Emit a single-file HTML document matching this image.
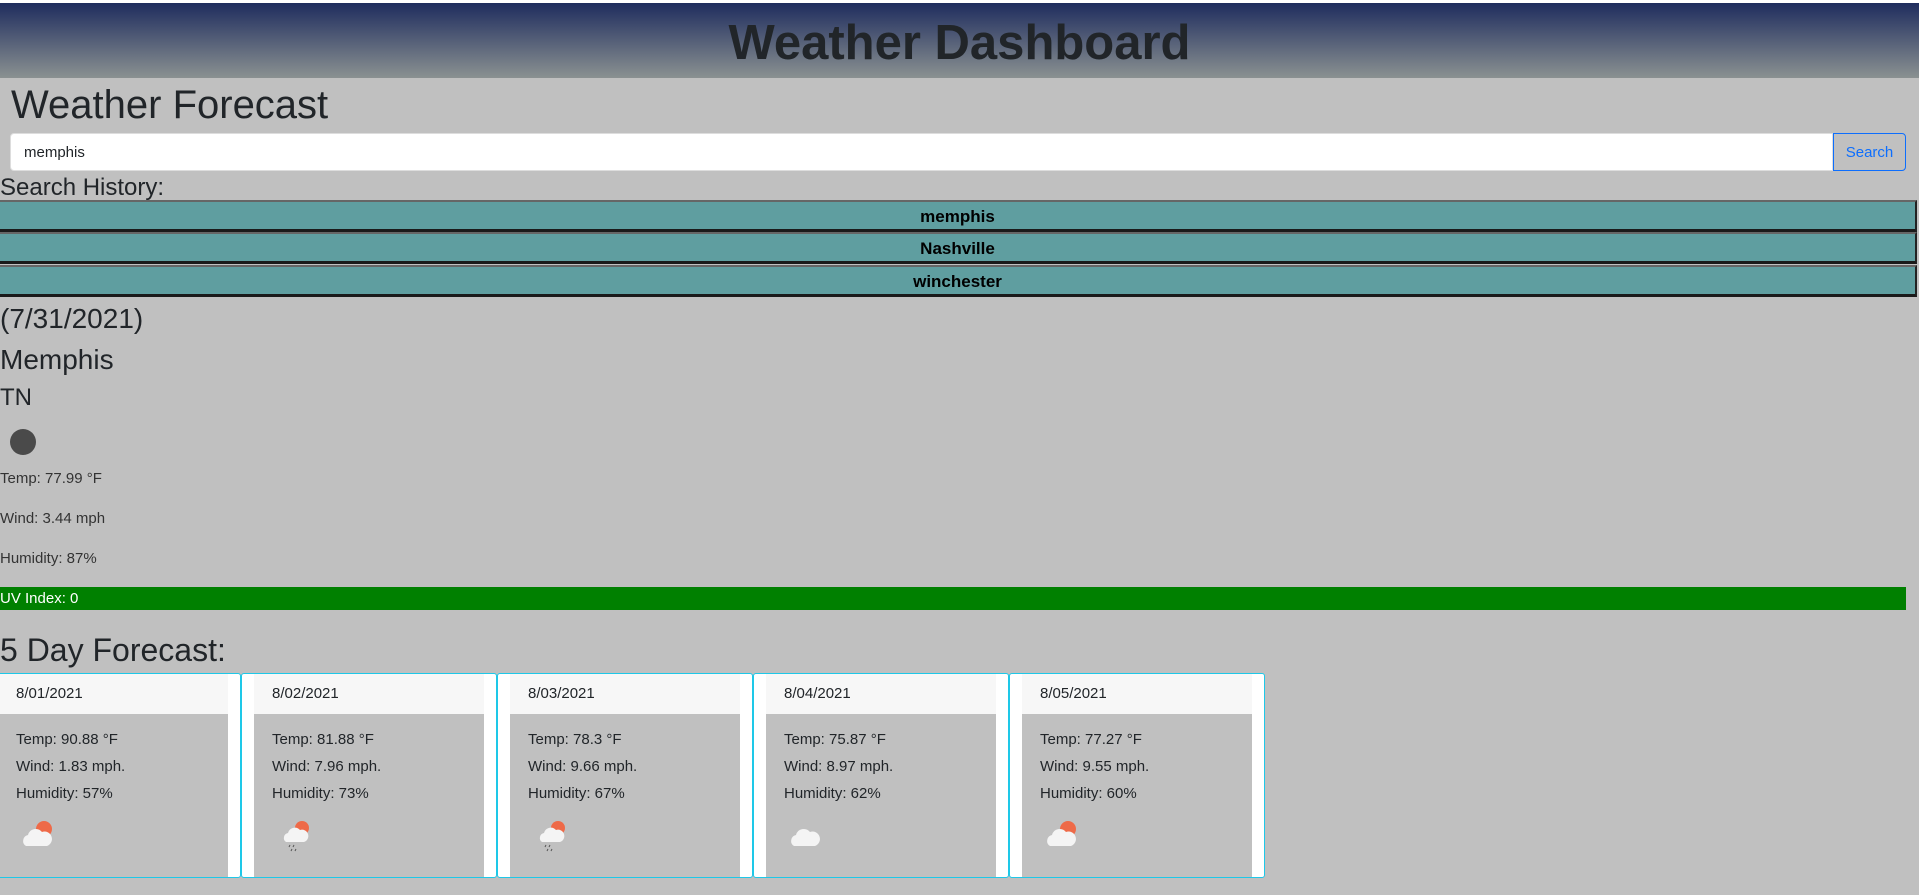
<!DOCTYPE html>
<html><head><style>
*{box-sizing:border-box;margin:0;padding:0}
body{width:1919px;height:895px;background:#c0c0c0;font-family:"Liberation Sans",sans-serif;color:#212529;position:relative;overflow:hidden}
.abs{position:absolute;white-space:nowrap}
header{position:absolute;left:0;top:3px;width:1919px;height:75px;background:linear-gradient(#1f2d5e,#8a9191);text-align:center;font-weight:bold;font-size:49px;line-height:80px;color:#212529}
.hist{position:absolute;left:0;width:1917px;height:32px;background:#5f9ea0;border-top:2px solid #666;border-bottom:3px solid #1a1a1a;border-right:2px solid #222;text-align:center;font-weight:bold;font-size:17px;line-height:29px;color:#000}
.card{position:absolute;top:673px;width:256px;height:205px;border:1px solid #1ec8e8;border-radius:3px;background:#fff}
.in{position:absolute;left:12px;right:12px;top:0;bottom:0;background:#c0c0c0}
.hd{height:40px;background:#f7f7f7;font-size:15px;line-height:40px;padding-left:18px}
.bd{padding:12px 18px;font-size:15px;line-height:27px}
</style></head><body>
<div style="position:absolute;left:0;top:0;width:1919px;height:3px;background:#fff"></div>
<header>Weather Dashboard</header>
<div class="abs" style="left:11px;top:81px;font-size:40px;line-height:48px">Weather Forecast</div>
<div style="position:absolute;left:10px;top:133px;width:1823px;height:38px;background:#fff;border:1px solid #ddd;border-radius:4px 0 0 4px;font-size:15px;line-height:38px;padding-left:13px">memphis</div>
<div style="position:absolute;left:1833px;top:133px;width:73px;height:38px;border:1px solid #0d6efd;border-radius:0 4px 4px 0;color:#0d6efd;font-size:15px;line-height:38px;text-align:center">Search</div>
<div class="abs" style="left:0;top:174px;font-size:24px;line-height:28px">Search History:</div>
<div class="hist" style="top:200px">memphis</div>
<div class="hist" style="top:232px">Nashville</div>
<div class="hist" style="top:265px">winchester</div>
<div class="abs" style="left:0;top:302px;font-size:28px;line-height:34px">(7/31/2021)</div>
<div class="abs" style="left:0;top:343px;font-size:28px;line-height:34px">Memphis</div>
<div class="abs" style="left:0;top:383px;font-size:24px;line-height:30px">TN</div>
<div style="position:absolute;left:10px;top:429px;width:26px;height:26px;border-radius:50%;background:#4a4a4a"></div>
<div class="abs" style="left:0;top:470px;font-size:15px;color:#333">Temp: 77.99 °F</div>
<div class="abs" style="left:0;top:510px;font-size:15px;color:#333">Wind: 3.44 mph</div>
<div class="abs" style="left:0;top:550px;font-size:15px;color:#333">Humidity: 87%</div>
<div style="position:absolute;left:0;top:587px;width:1906px;height:23px;background:#008000;color:#fff;font-size:15px;line-height:23px">UV Index: 0</div>
<div class="abs" style="left:0;top:631px;font-size:32px;line-height:38px">5 Day Forecast:</div>

<div class="card" style="left:-15px"><div class="in"><div class="hd">8/01/2021</div><div class="bd">Temp: 90.88 °F<br>Wind: 1.83 mph.<br>Humidity: 57%</div>
<svg style="position:absolute;left:22px;top:144px" width="36" height="32"><circle cx="24" cy="11" r="8" fill="#ee6a48"/><path d="M6 28a6 6 0 0 1 2-11a8 8 0 0 1 14-3a6 6 0 0 1 5 14z" fill="#f4f4f4"/></svg></div></div>
<div class="card" style="left:241px"><div class="in"><div class="hd">8/02/2021</div><div class="bd">Temp: 81.88 °F<br>Wind: 7.96 mph.<br>Humidity: 73%</div>
<svg style="position:absolute;left:26px;top:144px" width="36" height="36"><circle cx="22" cy="10" r="7" fill="#ee6a48"/><path d="M6 24a5 5 0 0 1 2-9a7 7 0 0 1 12-3a5 5 0 0 1 4 12z" fill="#f4f4f4"/><path d="M10 27l-1 2M14 27l-1 2M12 31l-1 2M16 31l-1 2" stroke="#555"/></svg></div></div>
<div class="card" style="left:497px"><div class="in"><div class="hd">8/03/2021</div><div class="bd">Temp: 78.3 °F<br>Wind: 9.66 mph.<br>Humidity: 67%</div>
<svg style="position:absolute;left:26px;top:144px" width="36" height="36"><circle cx="22" cy="10" r="7" fill="#ee6a48"/><path d="M6 24a5 5 0 0 1 2-9a7 7 0 0 1 12-3a5 5 0 0 1 4 12z" fill="#f4f4f4"/><path d="M10 27l-1 2M14 27l-1 2M12 31l-1 2M16 31l-1 2" stroke="#555"/></svg></div></div>
<div class="card" style="left:753px"><div class="in"><div class="hd">8/04/2021</div><div class="bd">Temp: 75.87 °F<br>Wind: 8.97 mph.<br>Humidity: 62%</div>
<svg style="position:absolute;left:22px;top:144px" width="36" height="32"><path d="M6 28a6 6 0 0 1 2-11a8 8 0 0 1 14-3a6 6 0 0 1 5 14z" fill="#f4f4f4"/></svg></div></div>
<div class="card" style="left:1009px"><div class="in"><div class="hd">8/05/2021</div><div class="bd">Temp: 77.27 °F<br>Wind: 9.55 mph.<br>Humidity: 60%</div>
<svg style="position:absolute;left:22px;top:144px" width="36" height="32"><circle cx="24" cy="11" r="8" fill="#ee6a48"/><path d="M6 28a6 6 0 0 1 2-11a8 8 0 0 1 14-3a6 6 0 0 1 5 14z" fill="#f4f4f4"/></svg></div></div>
</body></html>
